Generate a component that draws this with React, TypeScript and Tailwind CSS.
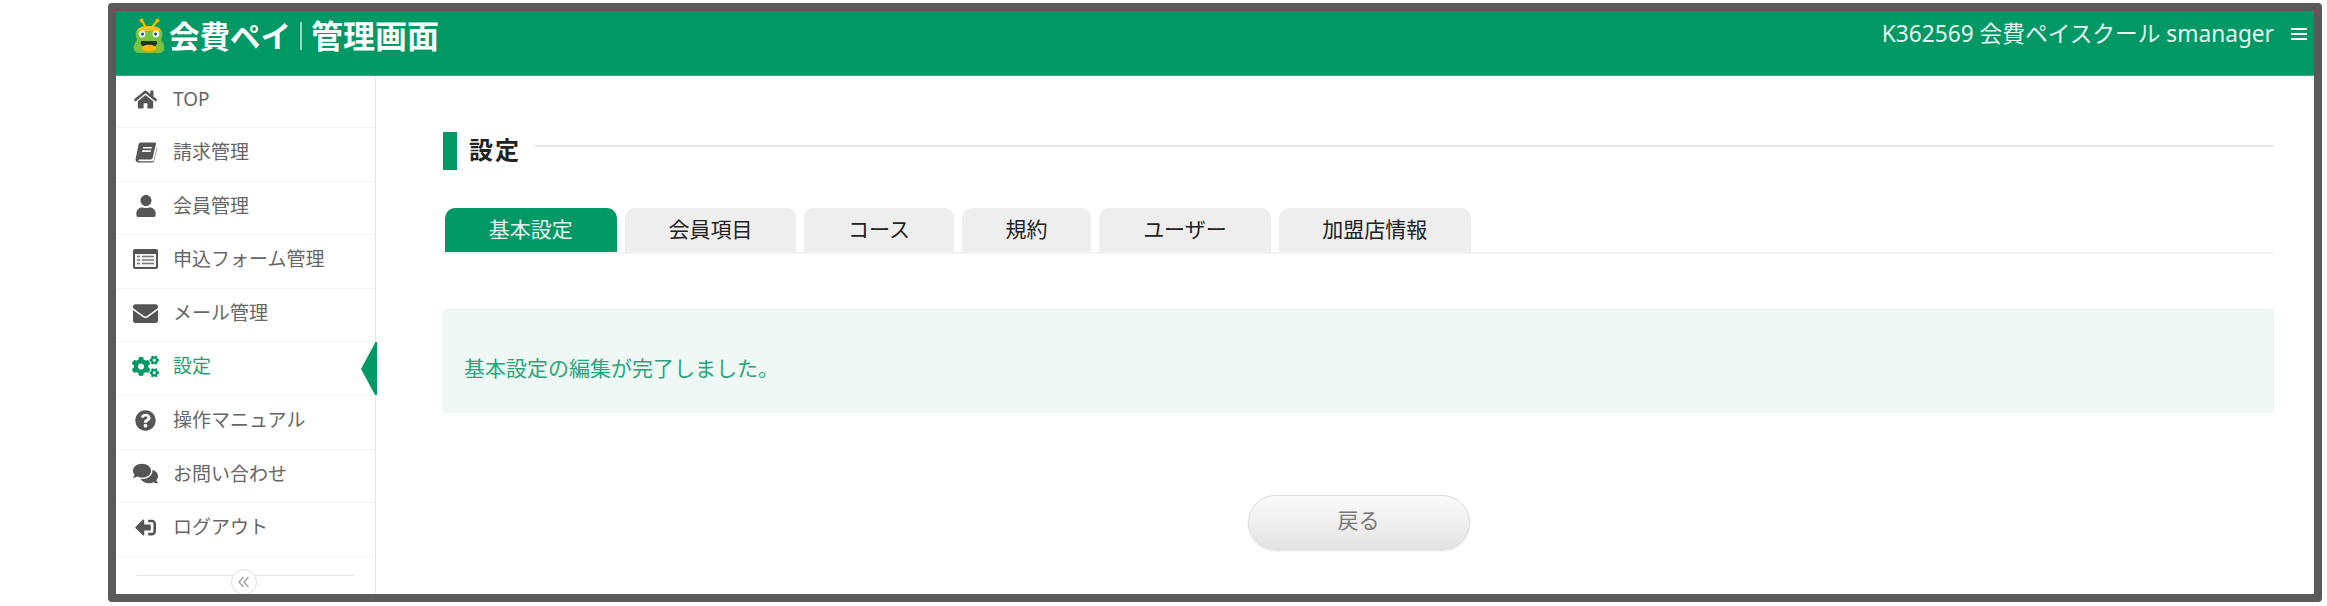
import React from "react";
import {
  FaCogs,
  FaComments,
  FaEnvelope,
  FaHome,
  FaQuestionCircle,
  FaSignOutAlt,
  FaUser,
} from "react-icons/fa";

const font = "font-['Noto_Sans','Noto_Sans_CJK_JP',sans-serif]";

const BookIcon = () => (
  <svg viewBox="0 0 24 24" className="h-[22px] w-[24px]" fill="#555">
    <path d="M6.5 1.5h15.2c.9 0 1.4.7 1.2 1.5L19.3 18.6c-.3 1.1-1.1 1.6-2.2 1.6H4.6c-.9 0-1.3.9-1 1.4.2.3.6.5 1 .5h14.6c.6 0 1-.3 1.2-.9L24 6.2v2.2l-3 13c-.3 1.3-1.1 2.1-2.5 2.1H4c-2.3 0-3.8-2-3.3-4.2L4 3.5c.3-1.2 1.2-2 2.5-2z" />
    <path d="M9 6.5h9.5l-.4 1.7H8.6zM8 10.2h9.5l-.4 1.7H7.6z" fill="#fff" />
  </svg>
);

const FormIcon = () => (
  <svg viewBox="0 0 25 20" className="h-[20px] w-[25px]">
    <rect x="0" y="0" width="25" height="20" rx="2" fill="#555" />
    <rect x="2" y="5" width="21" height="13" fill="#f4f4f4" />
    <path d="M4 7.5h3M9 7.5h12M4 11h3M9 11h12M4 14.5h3M9 14.5h12" stroke="#777" strokeWidth="1.6" />
  </svg>
);

const FrogLogo = () => (
  <svg viewBox="0 0 32 36" className="h-[36px] w-[32px]">
    <path d="M12 8 L9 3 M20 8 L24 3" stroke="#f2b705" strokeWidth="2.4" fill="none" strokeLinecap="round" />
    <circle cx="8.5" cy="2.5" r="2" fill="#f2b705" />
    <circle cx="24.5" cy="2.5" r="2" fill="#f2b705" />
    <path d="M4 13c0-3 4-5 12-5s12 2 12 5v2H4z" fill="#f2c21a" />
    <path d="M3 13h26c1 4 0 7-1 9 3 3 4 7 3 10-1 2-3 3-5 3H6c-2 0-4-1-5-3-1-3 0-7 3-10-1-2-2-5-1-9z" fill="#7cc242" />
    <circle cx="9" cy="16" r="3.4" fill="#e8f3ee" />
    <circle cx="23" cy="16" r="3.4" fill="#e8f3ee" />
    <circle cx="9.5" cy="16" r="1.5" fill="#24506a" />
    <circle cx="22.5" cy="16" r="1.5" fill="#24506a" />
    <path d="M9 23h14c1 0 1.500 1 1.200 2-.6 2-1.500 3-2.700 3.600H10.500C9 28 8 27 7.600 25c-.2-1 .4-2 1.400-2z" fill="#1f3a1a" />
    <ellipse cx="16" cy="30" rx="7" ry="3.200" fill="#fdbb12" />
  </svg>
);

const menu = [
  { label: "TOP", icon: <FaHome size={23} /> },
  { label: "請求管理", icon: <BookIcon /> },
  { label: "会員管理", icon: <FaUser size={22} /> },
  { label: "申込フォーム管理", icon: <FormIcon /> },
  { label: "メール管理", icon: <FaEnvelope size={25} /> },
  { label: "設定", icon: <FaCogs size={27} />, active: true },
  { label: "操作マニュアル", icon: <FaQuestionCircle size={21} /> },
  { label: "お問い合わせ", icon: <FaComments size={25} /> },
  { label: "ログアウト", icon: <FaSignOutAlt size={21} className="-scale-x-100" /> },
];

const tabs = ["基本設定", "会員項目", "コース", "規約", "ユーザー", "加盟店情報"];

export default function App() {
  return (
    <div className={`h-[606px] w-[2327px] overflow-hidden bg-white pt-[3px] pl-[108px] ${font}`}>
      <div className="flex h-[599px] w-[2214px] flex-col overflow-hidden rounded-[4px] border-8 border-[#5a5a5a] bg-white">
        <header className="flex h-[65px] shrink-0 items-start justify-between border-b border-[#33ad85] bg-[#009966] pl-[17px] pr-[7px]">
          <div className="flex items-center pt-[5px]">
            <FrogLogo />
            <span className="ml-[4px] text-[30.5px] font-semibold leading-[40px] text-white">会費ペイ</span>
            <span className="mx-[9px] h-[28px] w-[2px] bg-[#9fd8c3]" />
            <span className="text-[32px] font-semibold leading-[40px] text-white">管理画面</span>
          </div>
          <div className="flex items-center pt-[7px]">
            <span className="text-[22.7px] leading-[32px] text-[#e6f5ef]">K362569 会費ペイスクール smanager</span>
            <span className="ml-[17px] flex w-[16px] flex-col gap-[3px]">
              <span className="h-[2px] bg-white" />
              <span className="h-[2px] bg-white" />
              <span className="h-[2px] bg-white" />
            </span>
          </div>
        </header>
        <div className="flex min-h-0 flex-1">
          <aside className="relative w-[260px] shrink-0 border-r border-[#e8e8e8]">
            {menu.map((item, i) => (
              <div
                key={item.label}
                className={`relative flex items-center border-b border-[#f3f3f3] pb-[4px] ${
                  i === 0 ? "h-[52px]" : "h-[53.6px]"
                } ${item.active ? "text-[#009966]" : "text-[#555]"}`}
              >
                <span className="flex w-[57px] shrink-0 justify-center pl-[2px]">{item.icon}</span>
                <span className={`text-[19px] ${item.active ? "text-[#1f9e73]" : "text-[#666]"}`}>{item.label}</span>
                {item.active && (
                  <span className="absolute right-[-2px] top-0 flex h-full items-center">
                    <span className="h-0 w-0 border-y-[26px] border-r-[14px] border-y-transparent border-r-[#009966]" />
                    <span className="h-full w-[2px] bg-[#009966]" />
                  </span>
                )}
              </div>
            ))}
            <div className="relative mx-[21px] mt-[18px] border-t border-[#e4e4e4]">
              <span className="absolute left-[94px] top-[-7px] flex h-[26px] w-[26px] items-center justify-center rounded-full border border-[#ddd] bg-white text-[#999]">
                <svg viewBox="0 0 14 14" className="h-[14px] w-[14px]" fill="none" stroke="#999" strokeWidth="1.2">
                  <path d="M6.500 2 2 7l4.500 5M11.500 2 7 7l4.500 5" />
                </svg>
              </span>
            </div>
          </aside>
          <main className="min-w-0 flex-1 pl-[67px] pr-[40px] pt-[56px]">
            <div className="flex h-[38px] items-center">
              <span className="h-[38px] w-[14px] bg-[#009966]" />
              <h1 className="ml-[12px] pb-[3px] text-[24px] font-bold tracking-[2px] text-[#222]">設定</h1>
              <span className="ml-[14px] mb-[10px] h-[2px] flex-1 bg-[#e8e8e8]" />
            </div>
            <nav className="mt-[38px] flex gap-[8px] border-b-2 border-[#f2f2f2] pl-[2px]">
              {tabs.map((tab, i) => (
                <div
                  key={tab}
                  className={`flex h-[44px] items-center rounded-t-[10px] px-[43.8px] text-[21px] ${
                    i === 0 ? "bg-[#009966] text-[#e6f5ef]" : "bg-[#eeeeee] text-[#222]"
                  }`}
                >
                  {tab}
                </div>
              ))}
            </nav>
            <div className="mt-[55px] flex h-[104px] items-center rounded-[4px] border border-[#e6f3ee] bg-[#eff8f5] pl-[20px] pt-[16px] text-[21px] text-[#2aa57a]">
              基本設定の編集が完了しました。
            </div>
            <div className="mt-[82px] flex justify-center">
              <button
                type="button"
                className="h-[55px] w-[222px] rounded-full border border-[#dddddd] bg-gradient-to-b from-[#fafafa] to-[#e4e4e4] pb-[4px] text-[21px] text-[#777] shadow-[0_1px_2px_rgba(0,0,0,0.12)]"
              >
                戻る
              </button>
            </div>
          </main>
        </div>
      </div>
    </div>
  );
}
